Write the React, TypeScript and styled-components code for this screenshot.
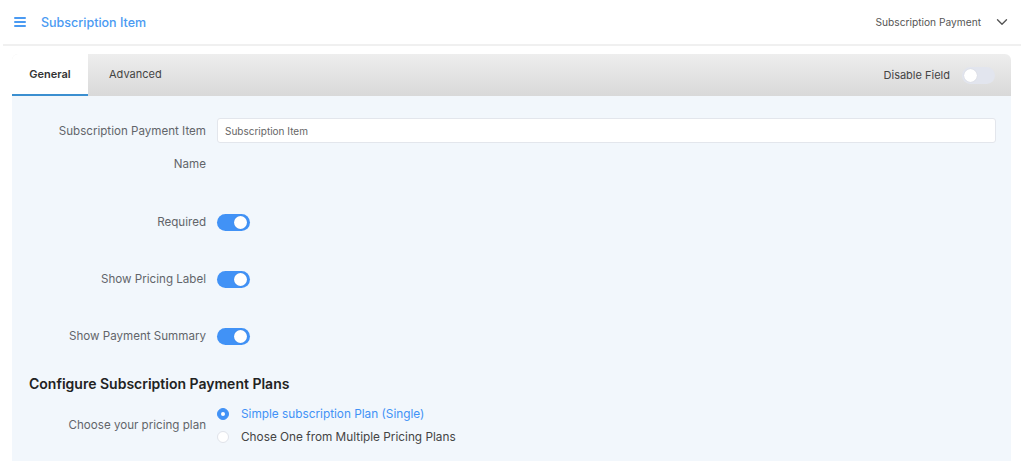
import styled, { createGlobalStyle } from "styled-components";
import { ChevronDown } from "lucide-react";

const enum Colors {
    Blue = "#4192f6",
    TitleBlue = "#4a9af2",
    Label = "#62656a",
    Text = "#444444",
    BodyBg = "#f2f7fc",
    ActiveLine = "#3b8fd0",
}

const GlobalStyle = createGlobalStyle`
    body {
        margin: 0;
        background: #ffffff;
        font-family: Inter, "Open Sans", "Liberation Sans", sans-serif;
        -webkit-font-smoothing: antialiased;
    }
`;

const App = () => {
    return (
        <>
            <GlobalStyle/>
            <Header>
                <HeaderLeft>
                    <Hamburger>
                        <span/><span/><span/>
                    </Hamburger>
                    <Title>Subscription Item</Title>
                </HeaderLeft>
                <HeaderRight>
                    <span>Subscription Payment</span>
                    <ChevronDown size={18} strokeWidth={1.8} color="#555"/>
                </HeaderRight>
            </Header>

            <Panel>
                <TabBar>
                    <Tabs>
                        <Tab active>General</Tab>
                        <Tab>Advanced</Tab>
                    </Tabs>
                    <TabRight>
                        <span>Disable Field</span>
                        <Switch on={false}/>
                    </TabRight>
                </TabBar>

                <Body>
                    <Row margin={25}>
                        <Label offset={2}>Subscription Payment Item<br/>Name</Label>
                        <Input placeholder="Subscription Item"/>
                    </Row>
                    <Row margin={24}>
                        <Label>Required</Label>
                        <Control><Switch on/></Control>
                    </Row>
                    <Row margin={24}>
                        <Label>Show Pricing Label</Label>
                        <Control><Switch on/></Control>
                    </Row>
                    <Row margin={21}>
                        <Label>Show Payment Summary</Label>
                        <Control><Switch on/></Control>
                    </Row>

                    <SectionTitle>Configure Subscription Payment Plans</SectionTitle>

                    <Row margin={0} center>
                        <Label>Choose your pricing plan</Label>
                        <RadioGroup>
                            <RadioItem checked>
                                <RadioDot checked/>
                                Simple subscription Plan (Single)
                            </RadioItem>
                            <RadioItem>
                                <RadioDot/>
                                Chose One from Multiple Pricing Plans
                            </RadioItem>
                        </RadioGroup>
                    </Row>
                </Body>
            </Panel>
        </>
    );
};

export default App;

const Header = styled.div`
    height: 44px;
    display: flex;
    align-items: center;
    justify-content: space-between;
    padding: 0 10px 0 11px;
    margin: 0 3px;
    border-bottom: 2px solid #f0f0f0;
`;

const HeaderLeft = styled.div`
    display: flex;
    align-items: center;
    gap: 15px;
`;

const Hamburger = styled.div`
    display: flex;
    flex-direction: column;
    gap: 2px;
    width: 12px;

    span {
        display: block;
        height: 2px;
        background: ${Colors.TitleBlue};
        border-radius: 1px;
    }
`;

const Title = styled.span`
    color: ${Colors.TitleBlue};
    font-size: 12.5px;
    font-weight: 500;
`;

const HeaderRight = styled.div`
    display: flex;
    align-items: center;
    gap: 12px;
    font-size: 10.2px;
    color: #555;
`;

const Panel = styled.div`
    margin: 8px 13px 0 12px;
`;

const TabBar = styled.div`
    height: 42px;
    display: flex;
    align-items: stretch;
    justify-content: space-between;
    background: linear-gradient(#eeeeee, #d9d9d9);
    border-radius: 6px 6px 0 0;
    overflow: hidden;
`;

const Tabs = styled.div`
    display: flex;
`;

const Tab = styled.div<{ active?: boolean }>`
    display: flex;
    align-items: center;
    justify-content: center;
    padding: 0 ${(p) => (p.active ? 18 : 21)}px;
    font-size: 11px;
    font-weight: ${(p) => (p.active ? 600 : 400)};
    color: ${(p) => (p.active ? "#333" : "#444")};
    background: ${(p) => (p.active ? "#ffffff" : "transparent")};
    border-bottom: 2px solid ${(p) => (p.active ? Colors.ActiveLine : "transparent")};
    width: ${(p) => (p.active ? "76px" : "auto")};
    box-sizing: border-box;
`;

const TabRight = styled.div`
    display: flex;
    align-items: center;
    gap: 12px;
    padding-right: 16px;
    font-size: 11px;
    color: #444;
`;

const Switch = styled.span<{ on: boolean }>`
    position: relative;
    display: inline-block;
    width: 33px;
    height: 17px;
    border-radius: 9px;
    background: ${(p) => (p.on ? Colors.Blue : "#e2e5ee")};

    &::after {
        content: "";
        position: absolute;
        top: 2px;
        left: ${(p) => (p.on ? "17px" : "2px")};
        width: 13px;
        height: 13px;
        border-radius: 50%;
        background: #ffffff;
        box-shadow: 0 0 1px rgba(0, 0, 0, 0.15);
    }
`;

const Body = styled.div`
    background: ${Colors.BodyBg};
    padding: 17px 15px 30px 17px;
`;

const Row = styled.div<{ margin: number; center?: boolean }>`
    display: flex;
    align-items: ${(p) => (p.center ? "center" : "flex-start")};
    gap: 11px;
    margin-bottom: ${(p) => p.margin}px;
`;

const Label = styled.div<{ offset?: number }>`
    width: 177px;
    flex-shrink: 0;
    text-align: right;
    font-size: 11.6px;
    line-height: 33px;
    margin-top: ${(p) => p.offset ?? 0}px;
    color: ${Colors.Label};
`;

const Control = styled.div`
    height: 33px;
    display: flex;
    align-items: center;
`;

const Input = styled.input`
    flex: 1;
    height: 25px;
    margin-top: 5px;
    box-sizing: border-box;
    border: 1px solid #e3e6ec;
    border-radius: 3px;
    background: #ffffff;
    padding: 0 7px;
    font-family: inherit;
    font-size: 10px;
    color: #333;
    outline: none;

    &::placeholder {
        color: #666;
    }
`;

const SectionTitle = styled.div`
    font-size: 14px;
    font-weight: 600;
    color: #222;
    line-height: 20px;
    margin-bottom: 8px;
`;

const RadioGroup = styled.div`
    display: flex;
    flex-direction: column;
`;

const RadioItem = styled.label<{ checked?: boolean }>`
    display: flex;
    align-items: center;
    gap: 12px;
    height: 23px;
    font-size: 11.8px;
    color: ${(p) => (p.checked ? Colors.Blue : Colors.Text)};
`;

const RadioDot = styled.span<{ checked?: boolean }>`
    width: 12px;
    height: 12px;
    box-sizing: border-box;
    border-radius: 50%;
    border: 1px solid ${(p) => (p.checked ? Colors.Blue : "#e0e3ea")};
    background: ${(p) => (p.checked ? Colors.Blue : "#ffffff")};
    display: flex;
    align-items: center;
    justify-content: center;

    &::after {
        content: "";
        width: 4px;
        height: 4px;
        border-radius: 50%;
        background: ${(p) => (p.checked ? "#ffffff" : "transparent")};
    }
`;
